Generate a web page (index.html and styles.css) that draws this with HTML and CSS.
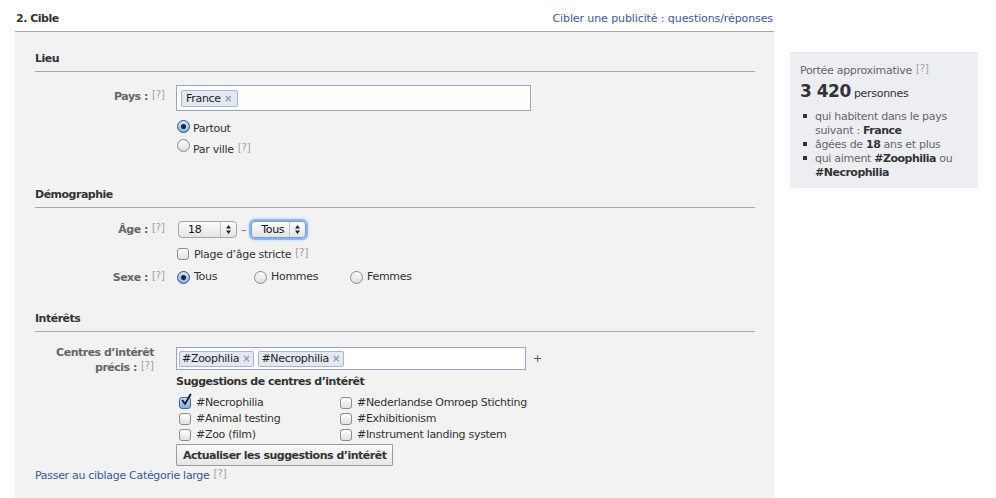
FILE: index.html
```html
<!DOCTYPE html>
<html lang="fr">
<head>
<meta charset="utf-8">
<title>Cible</title>
<link rel="stylesheet" href="styles.css">
</head>
<body>
<div class="page">
  <div class="main">
    <div class="topbar">
      <span class="title">2. Cible</span>
      <a class="link" href="#">Cibler une publicité : questions/réponses</a>
    </div>
    <div class="panel">
      <section class="sec sec-lieu">
        <h3 class="sec-title">Lieu</h3>
        <div class="field field-pays">
          <div class="lbl">Pays :<span class="help">[?]</span></div>
          <div class="ctl">
            <div class="tokenbox tokenbox-pays">
              <span class="token">France <span class="x">×</span></span>
            </div>
            <div class="radio-list">
              <div class="ropt"><span class="radio on"></span><span class="rtxt">Partout</span></div>
              <div class="ropt"><span class="radio"></span><span class="rtxt">Par ville<span class="help">[?]</span></span></div>
            </div>
          </div>
        </div>
      </section>

      <section class="sec sec-demo">
        <h3 class="sec-title">Démographie</h3>
        <div class="field field-age">
          <div class="lbl">Âge :<span class="help">[?]</span></div>
          <div class="ctl">
            <div class="age-row">
              <div class="select sel-min"><span class="val">18</span><span class="arr"><svg width="5" height="9" viewBox="0 0 5 9"><path d="M0 3.6 L2.5 0 L5 3.6 Z M0 5.4 L5 5.4 L2.5 9 Z" fill="#222"/></svg></span></div>
              <span class="dash">–</span>
              <div class="select sel-max focus"><span class="val">Tous</span><span class="arr"><svg width="5" height="9" viewBox="0 0 5 9"><path d="M0 3.6 L2.5 0 L5 3.6 Z M0 5.4 L5 5.4 L2.5 9 Z" fill="#222"/></svg></span></div>
            </div>
            <div class="copt copt-strict"><span class="checkbox"></span><span class="ctxt">Plage d’âge stricte<span class="help">[?]</span></span></div>
          </div>
        </div>
        <div class="field field-sexe">
          <div class="lbl">Sexe :<span class="help">[?]</span></div>
          <div class="ctl sexe-opts">
            <div class="sopt"><span class="radio on"></span><span>Tous</span></div>
            <div class="sopt"><span class="radio"></span><span>Hommes</span></div>
            <div class="sopt"><span class="radio"></span><span>Femmes</span></div>
          </div>
        </div>
      </section>

      <section class="sec sec-int">
        <h3 class="sec-title">Intérêts</h3>
        <div class="field field-centres">
          <div class="lbl lbl-centres">Centres d’intérêt précis :<span class="help">[?]</span></div>
          <div class="ctl">
            <div class="input-line">
              <div class="tokenbox tokenbox-int">
                <span class="token">#Zoophilia <span class="x">×</span></span>
                <span class="token">#Necrophilia <span class="x">×</span></span>
              </div>
              <span class="plus">+</span>
            </div>
            <div class="sugg-title">Suggestions de centres d’intérêt</div>
            <div class="sugg-grid">
              <div class="copt"><span class="checkbox on"><svg width="13" height="13" viewBox="0 0 13 13"><path d="M2.5 6.5 L5 10 L10.5 0.5" fill="none" stroke="#1b2437" stroke-width="2" stroke-linecap="round" stroke-linejoin="round"/></svg></span><span class="ctxt">#Necrophilia</span></div>
              <div class="copt"><span class="checkbox"></span><span class="ctxt">#Nederlandse Omroep Stichting</span></div>
              <div class="copt"><span class="checkbox"></span><span class="ctxt">#Animal testing</span></div>
              <div class="copt"><span class="checkbox"></span><span class="ctxt">#Exhibitionism</span></div>
              <div class="copt"><span class="checkbox"></span><span class="ctxt">#Zoo (film)</span></div>
              <div class="copt"><span class="checkbox"></span><span class="ctxt">#Instrument landing system</span></div>
            </div>
            <button class="btn" type="button">Actualiser les suggestions d’intérêt</button>
          </div>
        </div>
        <div class="broad"><a class="link" href="#">Passer au ciblage Catégorie large</a><span class="help">[?]</span></div>
      </section>
    </div>
  </div>

  <aside class="reach">
    <div class="reach-title">Portée approximative<span class="help">[?]</span></div>
    <div class="count"><span class="num">3 420</span> personnes</div>
    <ul class="reach-list">
      <li>qui habitent dans le pays suivant : <b>France</b></li>
      <li>âgées de <b>18</b> ans et plus</li>
      <li>qui aiment <b>#Zoophilia</b> ou <b>#Necrophilia</b></li>
    </ul>
  </aside>
</div>
</body>
</html>
```

FILE: styles.css
```css
* { box-sizing: border-box; }

body {
  margin: 0;
  font-family: "DejaVu Sans", "Liberation Sans", sans-serif;
  font-size: 11px;
  line-height: 14px;
  color: #333;
  background: #fff;
  letter-spacing: -0.3px;
}

b, .title, .sec-title, .lbl, .sugg-title, .btn, .num {
  letter-spacing: -0.5px;
}

.page {
  display: flex;
  align-items: flex-start;
  padding-left: 15px;
}

.main {
  width: 759px;
  flex-shrink: 0;
}

.topbar {
  display: flex;
  justify-content: space-between;
  align-items: flex-end;
  height: 32px;
  padding: 0 1px 5px 1px;
  border-bottom: 1px solid #a9a9a9;
}

.topbar .link { letter-spacing: -0.1px; }

.title { font-weight: bold; }

.link {
  color: #3b5998;
  text-decoration: none;
}

.panel {
  background: #f2f2f2;
  padding: 20px 19px 30px 20px;
}

.sec-title {
  margin: 0;
  font-size: 11px;
  font-weight: bold;
  line-height: 14px;
  padding-bottom: 5px;
  border-bottom: 1px solid #a8a8a8;
  color: #333;
}

.sec-demo { margin-top: 30px; }
.sec-int { margin-top: 27px; }

.field { display: flex; }

.lbl {
  width: 141px;
  flex-shrink: 0;
  padding-right: 11px;
  text-align: right;
  font-weight: bold;
  color: #666;
}

.help {
  font-size: 10px;
  font-weight: normal;
  color: #a0a0a0;
  letter-spacing: 0;
  margin-left: 4px;
  vertical-align: 2px;
}

.ctl { flex: 1; }

/* Lieu */
.field-pays { margin-top: 13px; }
.field-pays .lbl { padding-top: 3px; }

.tokenbox {
  display: flex;
  align-items: center;
  gap: 4px;
  background: #fff;
  border: 1px solid #96a6c7;
}

.tokenbox-pays {
  width: 355px;
  height: 26px;
  padding: 0 4px;
}

.token {
  height: 17px;
  line-height: 15px;
  padding: 0 5px 0 4px;
  border: 1px solid #aab6ce;
  border-radius: 2px;
  background: #e3e8f2;
  color: #222;
  white-space: nowrap;
}

.token .x {
  color: #8d9ab5;
  font-weight: bold;
  font-size: 10px;
}

.radio-list { margin-top: 9px; }

.ropt {
  display: flex;
  height: 19px;
  gap: 3px;
  margin-left: 1px;
}

.ropt .rtxt { padding-top: 2px; }

.radio {
  width: 13px;
  height: 13px;
  flex-shrink: 0;
  border-radius: 50%;
  border: 1px solid #8a8a8a;
  background: linear-gradient(#ffffff, #dcdcdc);
  display: flex;
  align-items: center;
  justify-content: center;
}

.radio.on {
  border-color: #2f4f80;
  background: linear-gradient(#d4e6f8, #7fb2e8);
}

.radio.on::after {
  content: "";
  width: 5px;
  height: 5px;
  border-radius: 50%;
  background: #1c2636;
}

/* Démographie */
.field-age { margin-top: 13px; }
.field-age .lbl { padding-top: 0; }

.age-row {
  display: flex;
  align-items: center;
  margin-left: 2px;
}

.select {
  display: flex;
  height: 17px;
  border: 1px solid #a6a6a6;
  border-radius: 4px;
  background: linear-gradient(#fdfdfd, #e4e4e4);
}

.select .val {
  flex: 1;
  padding-left: 9px;
  line-height: 15px;
  color: #111;
}

.select .arr {
  width: 16px;
  border-left: 1px solid #c2c2c2;
  display: flex;
  align-items: center;
  justify-content: center;
}

.sel-min { width: 59px; }
.sel-max { width: 55px; }

.select.focus {
  border-color: #7a9cc9;
  box-shadow: 0 0 0 2px #8db7ea, 0 0 3px 2px #b4cff0;
}

.dash {
  margin: 0 5px 0 4px;
  color: #666;
}

.copt {
  display: flex;
  align-items: center;
  gap: 5px;
  height: 16px;
}

.copt-strict {
  margin-top: 8px;
  margin-left: 1px;
}

.checkbox {
  width: 12px;
  height: 12px;
  flex-shrink: 0;
  border: 1px solid #8c8c8c;
  border-radius: 3px;
  background: linear-gradient(#ffffff, #e0e0e0);
}

.checkbox.on {
  border-color: #47699a;
  background: linear-gradient(#d0e4f8, #78aee8);
}

.checkbox svg {
  display: block;
  overflow: visible;
  margin: -4px 0 0 0;
}

.field-sexe { margin-top: 7px; }

.sexe-opts {
  display: grid;
  grid-template-columns: 77px 96px auto;
  padding-left: 1px;
}

.sopt {
  display: flex;
  align-items: center;
  gap: 4px;
}

/* Intérêts */
.field-centres { margin-top: 15px; }

.lbl-centres {
  padding-right: 22px;
  line-height: 13px;
  margin-top: -1px;
}

.input-line {
  display: flex;
  align-items: center;
}

.tokenbox-int {
  width: 350px;
  height: 23px;
  padding: 0 2px;
}

.tokenbox-int .token {
  height: 16px;
  line-height: 14px;
  padding: 0 3px 0 2px;
}

.plus {
  margin-left: 7px;
  color: #555;
}

.sugg-title {
  margin-top: 5px;
  font-weight: bold;
  color: #333;
}

.sugg-grid {
  display: grid;
  grid-template-columns: 161px auto;
  margin-top: 6px;
  padding-left: 3px;
}

.btn {
  display: block;
  margin-top: 1px;
  height: 22px;
  padding: 0 6px;
  font-family: inherit;
  font-size: 11px;
  font-weight: bold;
  color: #333;
  background: linear-gradient(#fafafa, #e6e6e6);
  border: 1px solid #9a9a9a;
  border-radius: 1px;
}

.broad { margin-top: 1px; }

/* Sidebar */
.reach {
  width: 188px;
  margin-left: 16px;
  margin-top: 52px;
  background: #edeef3;
  border-top: 1px solid #dfe3ec;
  padding: 9px 10px 8px 10px;
  color: #666;
}

.count {
  margin-top: 2px;
  line-height: 22px;
  color: #333;
}

.num {
  font-size: 17px;
  font-weight: bold;
}

.reach-list {
  list-style: none;
  margin: 5px 0 0 0;
  padding: 0;
}

.reach-list li {
  padding-left: 15px;
  text-indent: -12px;
  line-height: 14px;
}

.reach-list li::before {
  content: "";
  display: inline-block;
  width: 4px;
  height: 4px;
  margin-right: 8px;
  vertical-align: 2px;
  background: #333;
}

.reach-list b { color: #333; }
```
